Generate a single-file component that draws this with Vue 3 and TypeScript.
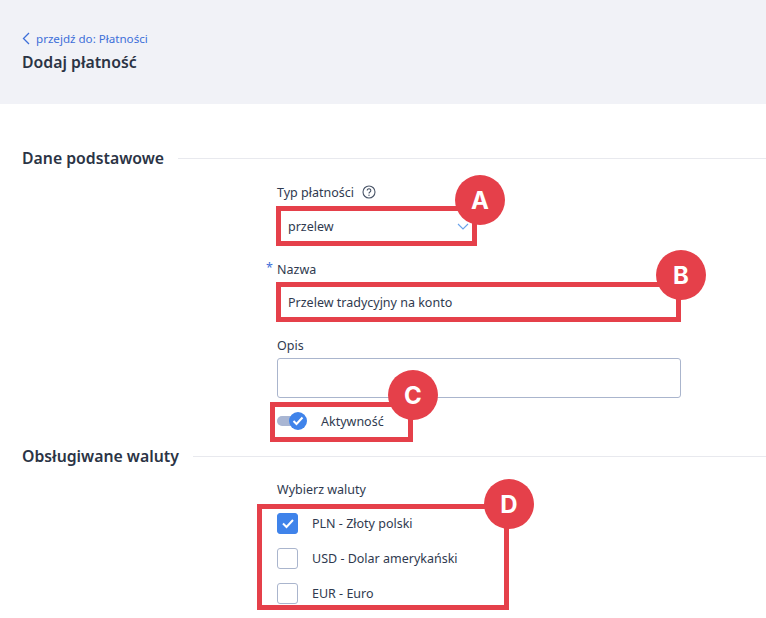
<script setup lang="ts">
const currencies = [
  { label: 'PLN - Złoty polski', checked: true },
  { label: 'USD - Dolar amerykański', checked: false },
  { label: 'EUR - Euro', checked: false },
]
const marks = [
  { letter: 'A', box: 'box-a', dot: 'dot-a' },
  { letter: 'B', box: 'box-b', dot: 'dot-b' },
  { letter: 'C', box: 'box-c', dot: 'dot-c' },
  { letter: 'D', box: 'box-d', dot: 'dot-d' },
]
</script>

<template>
  <div class="page">
    <header class="head">
      <a class="back">
        <svg width="8" height="13" viewBox="0 0 8 13" fill="none"><path d="M7 1 L1.5 6.5 L7 12" stroke="#3d6fd9" stroke-width="1.3"/></svg>
        <span>przejdź do: Płatności</span>
      </a>
      <h1>Dodaj płatność</h1>
    </header>

    <section class="section first">
      <div class="sec-title"><h2>Dane podstawowe</h2><i></i></div>
      <div class="form">
        <div class="field f-type">
          <label>Typ płatności
            <svg class="help" width="14" height="14" viewBox="0 0 14 14" fill="none"><circle cx="7" cy="7" r="6" stroke="#4a5568" stroke-width="1.1"/><path d="M5.2 5.5a1.8 1.8 0 1 1 2.7 1.6c-.6.35-.9.7-.9 1.3" stroke="#4a5568" stroke-width="1.1"/><circle cx="7" cy="10.3" r=".7" fill="#4a5568"/></svg>
          </label>
          <div class="control select">
            <span>przelew</span>
            <svg width="12" height="7" viewBox="0 0 12 7" fill="none"><path d="M1 1 L6 6 L11 1" stroke="#6aa3ea" stroke-width="1.1"/></svg>
          </div>
        </div>
        <div class="field f-name">
          <label><b>*</b>Nazwa</label>
          <div class="control">Przelew tradycyjny na konto</div>
        </div>
        <div class="field f-desc">
          <label>Opis</label>
          <div class="control bordered"></div>
        </div>
        <div class="toggle">
          <span class="track"></span>
          <span class="knob">
            <svg width="12" height="10" viewBox="0 0 12 10" fill="none"><path d="M1.5 5 L4.5 8 L10.5 1.5" stroke="#fff" stroke-width="2"/></svg>
          </span>
          <span class="toggle-label">Aktywność</span>
        </div>
      </div>
    </section>

    <section class="section second">
      <div class="sec-title"><h2>Obsługiwane waluty</h2><i></i></div>
      <div class="form">
        <div class="cur-label">Wybierz waluty</div>
        <div v-for="c in currencies" :key="c.label" class="check">
          <span class="cb" :class="{ on: c.checked }">
            <svg v-if="c.checked" width="14" height="11" viewBox="0 0 14 11" fill="none"><path d="M2 5.5 L5.5 9 L12 2" stroke="#fff" stroke-width="2"/></svg>
          </span>
          <span>{{ c.label }}</span>
        </div>
      </div>
    </section>

    <template v-for="m in marks" :key="m.letter">
      <div class="mark-box" :class="m.box"></div>
      <div class="mark-dot" :class="m.dot">{{ m.letter }}</div>
    </template>
  </div>
</template>

<style>
html, body { margin: 0; background: #fff; }
</style>

<style scoped>
.page {
  position: relative;
  width: 766px;
  height: 618px;
  overflow: hidden;
  font-family: "Noto Sans", sans-serif;
  font-size: 12.5px;
  color: #2f3a4f;
  background: #fff;
}
.head {
  height: 104px;
  box-sizing: border-box;
  padding: 29px 22px 0;
  background: #f1f2f7;
}
.back {
  display: flex;
  align-items: center;
  gap: 6px;
  height: 18px;
  font-size: 11.6px;
  color: #3d6fd9;
}
.head h1 {
  margin: 5px 0 0;
  font-size: 15.8px;
  line-height: 20px;
  font-weight: 600;
  color: #2b3445;
}
.section { padding-left: 22px; }
.first { padding-top: 43px; }
.second { padding-top: 13px; }
.sec-title {
  display: flex;
  align-items: center;
  gap: 14px;
  height: 22px;
}
.sec-title h2 {
  margin: 0;
  font-size: 15.8px;
  font-weight: 600;
  color: #2b3445;
}
.sec-title i {
  flex: 1;
  height: 1px;
  background: #e8e9ee;
}
.form {
  margin-left: 255px;
  width: 404px;
}
.field label {
  display: flex;
  align-items: center;
  gap: 8px;
  height: 18px;
  position: relative;
  font-weight: 400;
}
.field label b {
  position: absolute;
  left: -11px;
  top: -1px;
  font-weight: 400;
  color: #3d6fd9;
}
.f-type { padding-top: 14px; }
.f-name { padding-top: 14px; }
.f-desc { padding-top: 14px; }
.control {
  height: 40px;
  box-sizing: border-box;
  padding: 0 11px;
  display: flex;
  align-items: center;
  margin-top: 4px;
}
.f-type .control { margin-top: 5px; }
.select {
  width: 200px;
  justify-content: space-between;
  padding-right: 8px;
}
.bordered {
  border: 1px solid #aab5cd;
  border-radius: 3px;
}
.toggle {
  position: relative;
  display: flex;
  align-items: center;
  height: 22px;
  margin-top: 12px;
}
.track {
  width: 24px;
  height: 10px;
  border-radius: 5px;
  background: #a9b6d3;
}
.knob {
  position: absolute;
  left: 12px;
  top: 2px;
  width: 18px;
  height: 18px;
  border-radius: 50%;
  background: #3f83ea;
  display: flex;
  align-items: center;
  justify-content: center;
}
.toggle-label { margin-left: 20px; }
.cur-label {
  margin-top: 14px;
  height: 18px;
  line-height: 18px;
}
.check {
  display: flex;
  align-items: center;
  gap: 14px;
  height: 35px;
}
.cur-label + .check { margin-top: 7px; }
.cb {
  width: 21px;
  height: 21px;
  box-sizing: border-box;
  border: 1px solid #aab5cd;
  border-radius: 3px;
  display: flex;
  align-items: center;
  justify-content: center;
}
.cb.on {
  background: #3f83ea;
  border-color: #3f83ea;
}
.mark-box {
  position: absolute;
  box-sizing: border-box;
  border: 5px solid #e5404a;
}
.box-a { left: 276px; top: 206px; width: 201px; height: 40px; }
.box-b { left: 276px; top: 282px; width: 405px; height: 40px; }
.box-c { left: 270px; top: 402px; width: 143px; height: 40px; }
.box-d { left: 257px; top: 504px; width: 252px; height: 106px; }
.mark-dot {
  position: absolute;
  width: 50px;
  height: 50px;
  border-radius: 50%;
  background: #e5404a;
  color: #fff;
  font-family: "Inter", sans-serif;
  font-weight: 700;
  font-size: 24px;
  display: flex;
  align-items: center;
  justify-content: center;
}
.dot-a { left: 455px; top: 175px; }
.dot-b { left: 656px; top: 250px; }
.dot-c { left: 388px; top: 370px; }
.dot-d { left: 484px; top: 479px; }
</style>
